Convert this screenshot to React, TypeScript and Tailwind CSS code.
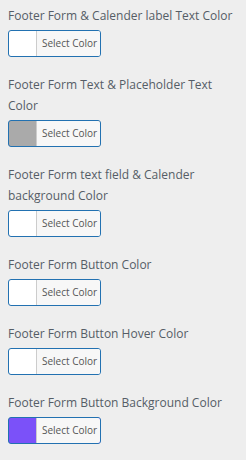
import React from "react"

interface ColorField {
  label: string
  color: string
}

const fields: ColorField[] = [
  { label: "Footer Form & Calender label Text Color", color: "#ffffff" },
  { label: "Footer Form Text & Placeholder Text Color", color: "#aaaaaa" },
  { label: "Footer Form text field & Calender background Color", color: "#ffffff" },
  { label: "Footer Form Button Color", color: "#ffffff" },
  { label: "Footer Form Button Hover Color", color: "#ffffff" },
  { label: "Footer Form Button Background Color", color: "#7b51f9" },
]

const ColorPicker = ({ color }: { color: string }) => (
  <button
    type="button"
    className="mt-[4px] flex h-[27px] w-[93px] overflow-hidden rounded-[3px] border border-[#2271b1] p-0"
    style={{ backgroundColor: color }}
  >
    <span className="w-[27px] shrink-0" />
    <span className="flex h-full flex-1 items-center whitespace-nowrap border-l border-[#cccccc] bg-[#f7f7f7] pl-[5px] text-[10px] text-[#555555]">
      Select Color
    </span>
  </button>
)

export default function App() {
  return (
    <div
      className="min-h-[460px] w-[246px] bg-[#eeeeee] pl-2 pr-1 pt-[5px]"
      style={{ fontFamily: '"Open Sans", "Noto Sans", sans-serif' }}
    >
      {fields.map((f) => (
        <div key={f.label} className="mb-[17px]">
          <div className="text-[12px] leading-[21px] text-[#555d66]">{f.label}</div>
          <ColorPicker color={f.color} />
        </div>
      ))}
    </div>
  )
}
